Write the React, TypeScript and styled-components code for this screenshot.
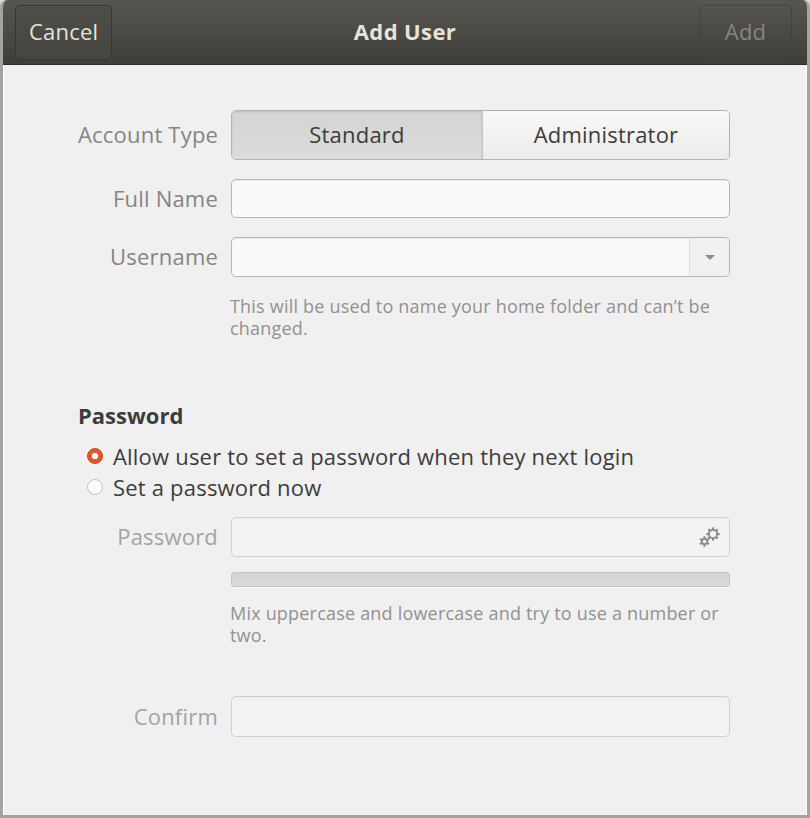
import React from 'react'
import styled, { createGlobalStyle, css } from 'styled-components'

const GlobalStyle = createGlobalStyle`
  html, body {
    margin: 0;
    padding: 0;
    background: #d8d8d6;
  }
  * { box-sizing: border-box; }
`

const font = `"Open Sans", "Noto Sans", "DejaVu Sans", sans-serif`

const Window = styled.div`
  width: 810px;
  height: 818px;
  display: flex;
  flex-direction: column;
  background: #f0f0f0;
  border: 3px solid #a3a3a1;
  border-top: none;
  border-radius: 7px 7px 0 0;
  overflow: hidden;
  font-family: ${font};
  box-shadow: inset 1px 0 0 #ffffff, inset -1px 0 0 #ffffff;
`

const HeaderBar = styled.header`
  height: 65px;
  flex: none;
  display: flex;
  align-items: center;
  justify-content: space-between;
  padding: 0 15px 0 12px;
  background: linear-gradient(#56554f, #3f3e3a);
  border-bottom: 1px solid #2e2d2a;
  position: relative;
`

const HeaderButton = styled.button<{ $disabled?: boolean }>`
  height: 55px;
  padding: 0 13px 2px;
  border: 1px solid #373632;
  border-radius: 5px;
  background: linear-gradient(#4e4d48, #46453f);
  box-shadow: inset 0 1px 0 rgba(255, 255, 255, 0.04);
  font-family: ${font};
  font-size: 22px;
  letter-spacing: 0.2px;
  color: #e6e4de;
  ${(p) =>
    p.$disabled &&
    css`
      color: #85847e;
      border-color: #43423d;
      background: transparent;
      min-width: 93px;
    `}
`

const Title = styled.div`
  position: absolute;
  left: 0;
  right: 0;
  padding-bottom: 2px;
  text-align: center;
  pointer-events: none;
  font-size: 22px;
  font-weight: 700;
  letter-spacing: 0.4px;
  color: #e6e3dc;
`

const Content = styled.div`
  display: flex;
  flex-direction: column;
  padding: 45px 0 0 75px;
  width: 727px;
`

const Row = styled.div<{ $top: number; $h: number }>`
  display: grid;
  grid-template-columns: 140px 1fr;
  column-gap: 13px;
  align-items: center;
  margin-top: ${(p) => p.$top}px;
  height: ${(p) => p.$h}px;
`

const Label = styled.div<{ $dim?: boolean }>`
  text-align: right;
  font-size: 22px;
  letter-spacing: 0.2px;
  padding-bottom: 2px;
  color: ${(p) => (p.$dim ? '#a3a3a1' : '#85857f')};
  white-space: nowrap;
`

const Segmented = styled.div`
  display: grid;
  grid-template-columns: 250px 1fr;
  height: 100%;
  border: 1px solid #b4b3ae;
  border-radius: 5px;
  overflow: hidden;
`

const Segment = styled.div<{ $active?: boolean }>`
  display: flex;
  align-items: center;
  justify-content: center;
  padding-bottom: 2px;
  font-size: 22px;
  letter-spacing: 0.2px;
  color: #3c3c3c;
  background: ${(p) =>
    p.$active ? 'linear-gradient(#d4d4d2, #dcdcda)' : 'linear-gradient(#f8f8f7, #ececeb)'};
  box-shadow: ${(p) => (p.$active ? 'inset 0 1px 2px rgba(0,0,0,0.12)' : 'none')};
  & + & {
    border-left: 1px solid #c3c2bd;
  }
`

const Entry = styled.div<{ $dim?: boolean }>`
  height: 100%;
  display: flex;
  align-items: center;
  justify-content: flex-end;
  border: 1px solid ${(p) => (p.$dim ? '#cfcfcb' : '#b6b5b0')};
  border-radius: 5px;
  background: ${(p) => (p.$dim ? '#f3f3f3' : '#fafafa')};
  box-shadow: inset 0 1px 1px rgba(0, 0, 0, ${(p) => (p.$dim ? 0.03 : 0.07)});
  overflow: hidden;
`

const ComboArrow = styled.div`
  width: 40px;
  height: 100%;
  display: flex;
  align-items: center;
  justify-content: center;
  border-left: 1px solid #dcdcd8;
  background: #f1f1f0;
  &::after {
    content: '';
    border-left: 5px solid transparent;
    border-right: 5px solid transparent;
    border-top: 5px solid #8c8c88;
  }
`

const GearBox = styled.div`
  width: 38px;
  display: flex;
  align-items: center;
  justify-content: center;
`

const Hint = styled.div<{ $top: number }>`
  margin-top: ${(p) => p.$top}px;
  margin-left: 152px;
  width: 540px;
  font-size: 18px;
  letter-spacing: 0.2px;
  line-height: 22px;
  color: #92928e;
  white-space: nowrap;
`

const Heading = styled.div`
  margin-top: 64px;
  font-size: 22px;
  line-height: 24px;
  font-weight: 700;
  color: #3c3c3c;
`

const RadioRow = styled.div<{ $top: number }>`
  display: flex;
  align-items: center;
  gap: 10px;
  margin-top: ${(p) => p.$top}px;
  margin-left: 9px;
  height: 31px;
  font-size: 22px;
  letter-spacing: 0.2px;
  color: #3c3c3c;
`

const RadioDot = styled.span<{ $checked?: boolean }>`
  width: 16px;
  height: 16px;
  border-radius: 50%;
  flex: none;
  ${(p) =>
    p.$checked
      ? css`
          background: radial-gradient(circle, #ffffff 0 3px, #e5572b 3.5px);
          border: 1px solid #c2461f;
        `
      : css`
          background: #fbfbfb;
          border: 1px solid #c4c4c0;
        `}
`

const StrengthBar = styled.div`
  margin-top: 15px;
  margin-left: 153px;
  height: 15px;
  border: 1px solid #c4c4c0;
  border-radius: 3px;
  background: linear-gradient(#d3d3d1, #dbdbd9);
  box-shadow: 0 1px 0 #fafafa;
`

// two small outlined gears, the larger one up and to the right
const Gear = ({ cx, cy, r, teeth }: { cx: number; cy: number; r: number; teeth: number }) => (
  <g>
    {Array.from({ length: teeth }).map((_, i) => (
      <rect
        key={i}
        x={cx - 1.1}
        y={cy - r - 1.6}
        width={2.2}
        height={2.6}
        transform={`rotate(${(360 / teeth) * i} ${cx} ${cy})`}
        fill="#8a8a86"
      />
    ))}
    <circle cx={cx} cy={cy} r={r - 0.9} fill="none" stroke="#8a8a86" strokeWidth={1.8} />
  </g>
)

const Gears = () => (
  <svg width="24" height="22" viewBox="0 0 24 22">
    <Gear cx={15} cy={8} r={5} teeth={8} />
    <Gear cx={6.5} cy={15.5} r={3.6} teeth={6} />
  </svg>
)

const App = () => {
  return (
    <>
      <GlobalStyle />
      <Window>
        <HeaderBar>
          <HeaderButton>Cancel</HeaderButton>
          <Title>Add User</Title>
          <HeaderButton $disabled>Add</HeaderButton>
        </HeaderBar>
        <Content>
          <Row $top={0} $h={50}>
            <Label>Account Type</Label>
            <Segmented>
              <Segment $active>Standard</Segment>
              <Segment>Administrator</Segment>
            </Segmented>
          </Row>
          <Row $top={19} $h={39}>
            <Label>Full Name</Label>
            <Entry />
          </Row>
          <Row $top={19} $h={40}>
            <Label>Username</Label>
            <Entry>
              <ComboArrow />
            </Entry>
          </Row>
          <Hint $top={18}>
            This will be used to name your home folder and can’t be
            <br />
            changed.
          </Hint>

          <Heading>Password</Heading>
          <RadioRow $top={13}>
            <RadioDot $checked />
            Allow user to set a password when they next login
          </RadioRow>
          <RadioRow $top={0}>
            <RadioDot />
            Set a password now
          </RadioRow>
          <Row $top={15} $h={40}>
            <Label $dim>Password</Label>
            <Entry $dim>
              <GearBox>
                <Gears />
              </GearBox>
            </Entry>
          </Row>
          <StrengthBar />
          <Hint $top={15}>
            Mix uppercase and lowercase and try to use a number or
            <br />
            two.
          </Hint>
          <Row $top={50} $h={41}>
            <Label $dim>Confirm</Label>
            <Entry $dim />
          </Row>
        </Content>
      </Window>
    </>
  )
}

export default App
